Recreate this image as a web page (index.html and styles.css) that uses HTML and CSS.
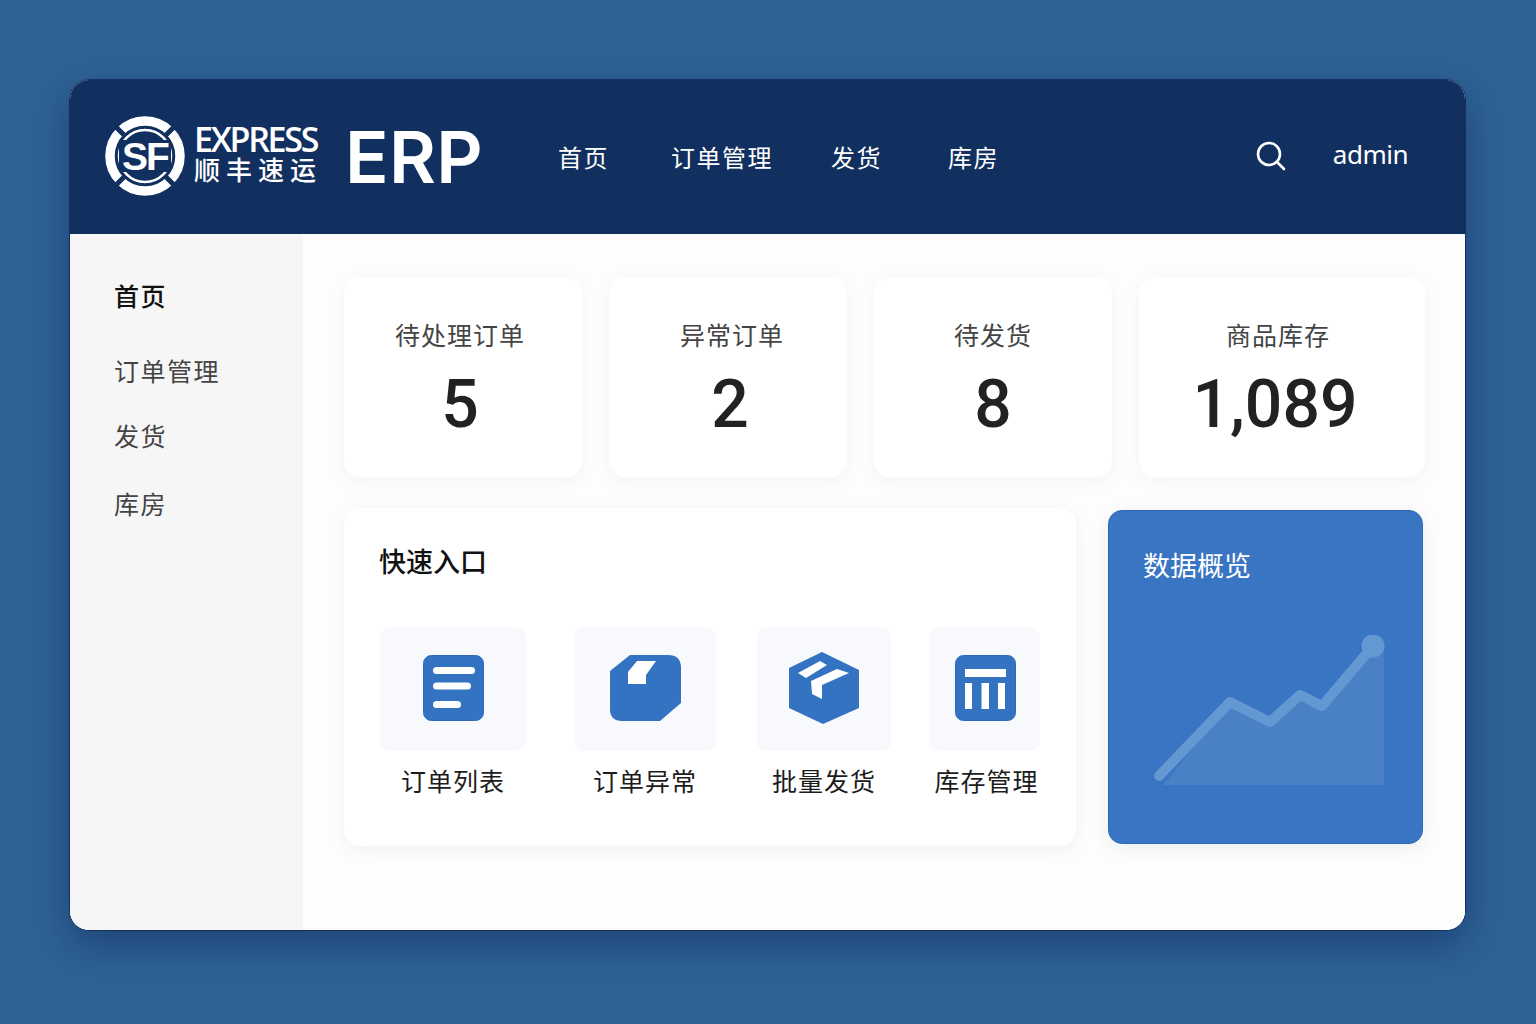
FILE: index.html
```html
<!DOCTYPE html>
<html lang="zh-CN">
<head>
<meta charset="utf-8">
<title>SF Express ERP</title>
<link rel="stylesheet" href="styles.css">
</head>
<body>
<div class="window">
  <header class="topbar">
    <div class="brand">
      <svg class="logo-mark" width="80" height="80" viewBox="0 0 80 80">
        <circle cx="40" cy="40" r="35" fill="none" stroke="#fff" stroke-width="9.500"/>
        <circle cx="40" cy="40" r="26" fill="none" stroke="#fff" stroke-width="2.500"/>
        <g stroke="#12305f" stroke-width="5">
          <line x1="9" y1="9" x2="20" y2="20"/><line x1="71" y1="9" x2="60" y2="20"/>
          <line x1="9" y1="71" x2="20" y2="60"/><line x1="71" y1="71" x2="60" y2="60"/>
        </g>
        <rect x="14" y="24" width="52" height="32" fill="#12305f"/>
        <text class="logo-sf" x="40" y="54" text-anchor="middle">SF</text>
      </svg>
      <div class="logo-words">
        <span class="logo-en">EXPRESS</span>
        <span class="logo-cn">顺丰速运</span>
      </div>
      <span class="erp">ERP</span>
    </div>
    <nav class="topnav">
      <a>首页</a><a>订单管理</a><a>发货</a><a>库房</a>
    </nav>
    <div class="user">
      <svg width="30" height="30" viewBox="0 0 30 30" fill="none" stroke="#fff" stroke-width="2.600" stroke-linecap="round">
        <circle cx="13" cy="13" r="11"/><line x1="21" y1="21" x2="28" y2="28"/>
      </svg>
      <span class="username">admin</span>
    </div>
  </header>
  <div class="body">
    <aside class="sidebar">
      <a class="side-item active">首页</a>
      <a class="side-item">订单管理</a>
      <a class="side-item">发货</a>
      <a class="side-item">库房</a>
    </aside>
    <main class="content">
      <section class="stats">
        <div class="stat"><div class="stat-label">待处理订单</div><div class="stat-value">5</div></div>
        <div class="stat"><div class="stat-label">异常订单</div><div class="stat-value">2</div></div>
        <div class="stat"><div class="stat-label">待发货</div><div class="stat-value">8</div></div>
        <div class="stat"><div class="stat-label">商品库存</div><div class="stat-value">1,089</div></div>
      </section>
      <section class="lower">
        <div class="quick">
          <h2 class="quick-title">快速入口</h2>
          <div class="quick-row">
            <div class="entry entry-a">
              <div class="tile">
                <svg width="61" height="66" viewBox="0 0 61 66">
                  <rect x="0.500" y="0.500" width="60" height="65" rx="8" fill="#3472c2" stroke="#2a68bb"/>
                  <rect x="10" y="12" width="42" height="7" rx="3.500" fill="#fff"/>
                  <rect x="10" y="27.500" width="38" height="7" rx="3.500" fill="#fff"/>
                  <rect x="10" y="46" width="28" height="7" rx="3.500" fill="#fff"/>
                </svg>
              </div>
              <span class="entry-label">订单列表</span>
            </div>
            <div class="entry entry-b">
              <div class="tile">
                <svg width="71" height="66" viewBox="0 0 71 66">
                  <path d="M0 16 20 0H58Q71 0 71 13V48L50 66H12Q0 66 0 54Z" fill="#3472c2"/>
                  <path d="M27 6H46L36 20V29H18V17Z" fill="#fff"/>
                </svg>
              </div>
              <span class="entry-label">订单异常</span>
            </div>
            <div class="entry entry-c">
              <div class="tile">
                <svg width="70" height="72" viewBox="0 0 70 72">
                  <path d="M33 0 70 18V56L34 72 0 56V16Z" fill="#3472c2"/>
                  <path d="M9 21 31 9 38 13 17 26Z" fill="#fff"/>
                  <path d="M22 29 48 17 60 21 33 33V47L23 42Z" fill="#fff"/>
                </svg>
              </div>
              <span class="entry-label">批量发货</span>
            </div>
            <div class="entry entry-d">
              <div class="tile">
                <svg width="61" height="66" viewBox="0 0 61 66">
                  <rect x="0.500" y="0.500" width="60" height="65" rx="8" fill="#3472c2" stroke="#2a68bb"/>
                  <rect x="10" y="14" width="41" height="8" fill="#fff"/>
                  <rect x="10" y="28" width="7" height="26" fill="#fff"/>
                  <rect x="26.500" y="28" width="7.500" height="26" fill="#fff"/>
                  <rect x="43" y="28" width="7" height="26" fill="#fff"/>
                </svg>
              </div>
              <span class="entry-label">库存管理</span>
            </div>
          </div>
        </div>
        <div class="overview">
          <h2 class="overview-title">数据概览</h2>
          <svg class="chart" width="245" height="170" viewBox="0 0 245 170">
            <path d="M13 150 80 67 120 87 150 60 172 71 223 11H234V150Z" fill="#4a80c4"/>
            <path d="M9 141 80 67 120 87 150 60 172 71 223 11" fill="none" stroke="#6398d3" stroke-width="10" stroke-linecap="round" stroke-linejoin="round"/>
            <circle cx="223" cy="11" r="11.500" fill="#6398d3"/>
          </svg>
        </div>
      </section>
    </main>
  </div>
</div>
</body>
</html>
```
FILE: styles.css
```css
* { box-sizing: border-box; }
html, body { margin: 0; height: 100%; }
body {
  width: 1536px;
  height: 1024px;
  overflow: hidden;
  padding: 79px 70px 0 69px;
  background: #2f6295;
  font-family: "Noto Sans CJK SC", "Noto Sans", sans-serif;
}
h2 { margin: 0; font-weight: 400; }
.window {
  width: 1397px;
  height: 852px;
  display: flex;
  flex-direction: column;
  border-radius: 20px;
  overflow: hidden;
  background: #fdfdfd;
  border: 1px solid #14305f;
  box-shadow: 0 14px 40px rgba(16, 44, 98, .55);
}
.topbar {
  flex: 0 0 154px;
  display: flex;
  align-items: center;
  padding: 0 57px 0 35px;
  background: #12305f;
  color: #fff;
}
.brand { display: flex; align-items: center; }
.logo-mark { display: block; margin-top: -2px; }
.logo-sf {
  font-family: "Liberation Sans", sans-serif;
  font-size: 39px;
  font-weight: 700;
  fill: #fff;
  letter-spacing: -2px;
}
.logo-words {
  display: flex;
  flex-direction: column;
  margin-left: 9px;
  margin-top: -6px;
  width: 124px;
}
.logo-en {
  font-family: "Open Sans", sans-serif;
  font-size: 34px;
  font-weight: 600;
  line-height: 30px;
  letter-spacing: -2.300px;
  white-space: nowrap;
}
.logo-cn {
  font-size: 26px;
  font-weight: 500;
  line-height: 30px;
  letter-spacing: 6px;
  white-space: nowrap;
}
.erp {
  margin-left: 27px;
  font-family: "Inter", sans-serif;
  font-size: 72px;
  font-weight: 600;
  line-height: 72px;
  letter-spacing: .300px;
}
.topnav {
  display: flex;
  gap: 62px;
  margin-left: 75px;
  font-size: 24px;
  line-height: 34px;
  letter-spacing: 1.500px;
}
.topnav a:nth-child(2) { margin-right: -4px; }
.topnav a:nth-child(3) { margin-right: 4px; }
.user {
  margin-left: auto;
  display: flex;
  align-items: center;
  gap: 47px;
  margin-top: -2px;
}
.username {
  font-family: "Noto Sans", sans-serif;
  font-size: 26px;
  line-height: 32px;
  letter-spacing: -.500px;
  margin-top: -4px;
}
.body { flex: 1; display: flex; min-height: 0; }
.sidebar {
  flex: 0 0 233px;
  display: flex;
  flex-direction: column;
  padding: 43px 0 0 44px;
  background: #f6f6f7;
  color: #444;
  font-size: 25px;
  line-height: 36px;
  letter-spacing: 1.500px;
}
.side-item { margin-bottom: 29px; }
.side-item.active { margin-bottom: 39px; color: #111; font-weight: 500; }
.side-item:nth-child(3) { margin-bottom: 32px; }
.content { flex: 1; padding: 43px 40px 0 41px; background: #fdfdfd; }
.stats {
  display: grid;
  grid-template-columns: 238px 238px 238px 286px;
  gap: 27px;
}
.stat {
  height: 200px;
  padding-top: 39px;
  text-align: center;
  background: #fff;
  border-radius: 16px;
  box-shadow: 0 4px 18px rgba(30, 40, 70, .04);
}
.stat:nth-child(1) { padding-right: 6px; }
.stat:nth-child(2) { padding-left: 8px; }
.stat:nth-child(4) { padding-right: 8px; }
.stat:nth-child(2) .stat-value { padding-right: 4px; }
.stat:nth-child(4) .stat-value { padding-right: 6px; }
.stat-label {
  font-size: 25px;
  line-height: 36px;
  letter-spacing: 1px;
  color: #444;
}
.stat-value {
  margin-top: 13px;
  font-family: "Roboto", sans-serif;
  font-size: 66px;
  font-weight: 500;
  line-height: 80px;
  color: #222;
}
.lower { display: flex; align-items: flex-start; margin-top: 31px; }
.quick {
  flex: 0 0 732px;
  height: 338px;
  padding: 33px 0 0 35px;
  background: #fff;
  border-radius: 16px;
  box-shadow: 0 4px 18px rgba(30, 40, 70, .05);
}
.quick-title {
  font-size: 27px;
  font-weight: 500;
  line-height: 40px;
  color: #111;
}
.quick-row { display: flex; margin-top: 46px; margin-left: 1px; }
.entry { display: flex; flex-direction: column; align-items: center; }
.entry-a { width: 146px; margin-right: 48px; }
.entry-b { width: 142px; margin-right: 41px; }
.entry-c { width: 134px; margin-right: 38px; }
.entry-d { width: 111px; }
.entry-d .tile { padding-left: 2px; }
.entry-d .entry-label { margin-left: 4px; }
.tile {
  width: 100%;
  height: 124px;
  padding-bottom: 2px;
  display: flex;
  align-items: center;
  justify-content: center;
  background: #f8f9fd;
  border-radius: 10px;
}
.entry-label {
  margin-top: 11px;
  font-size: 25px;
  line-height: 36px;
  letter-spacing: 1px;
  color: #1c1c1c;
  white-space: nowrap;
}
.overview {
  flex: 0 0 315px;
  height: 334px;
  margin: 2px 0 0 32px;
  padding: 34px 0 0 34px;
  background: #3a75c3;
  border: 1px solid #2a68bb;
  border-radius: 14px;
  box-shadow: 0 4px 18px rgba(30, 40, 70, .07);
}
.overview-title {
  font-size: 27px;
  line-height: 40px;
  color: #fff;
}
.chart { display: block; margin: 50px 0 0 7px; }
```
